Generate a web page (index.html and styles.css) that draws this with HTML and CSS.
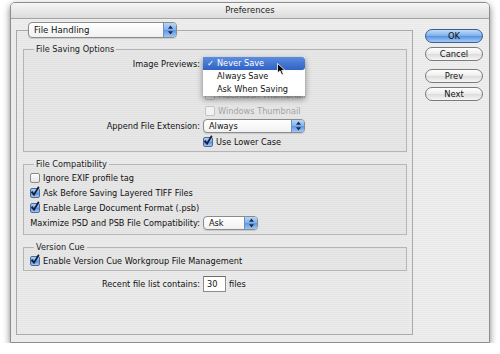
FILE: index.html
```html
<!DOCTYPE html>
<html lang="en">
<head>
    <meta charset="UTF-8">
    <title>Preferences</title>
    <link rel="stylesheet" href="styles.css">
</head>
<body>
    <div class="window">
        <div class="titlebar">Preferences</div>

        <div class="content">
            <fieldset class="panel">
                <legend class="panel-legend">
                    <span class="popup popup-wide">
                        <span class="popup-label">File Handling</span>
                        <span class="popup-cap"><svg width="7" height="10" viewBox="0 0 7 10"><path d="M3.5 0.5 L6 3.8 H1Z M3.5 9.5 L6 6.2 H1Z" fill="#1b2a48"/></svg></span>
                    </span>
                </legend>

                <fieldset class="group group-saving">
                    <legend>File Saving Options</legend>
                    <div class="form-grid">
                        <span class="field-label">Image Previews:</span>
                        <div class="field has-menu">
                            <span class="popup">
                                <span class="popup-label"></span>
                                <span class="popup-cap"></span>
                            </span>
                            <ul class="menu">
                                <li class="menu-item selected"><span class="tick">&#10003;</span>Never Save</li>
                                <li class="menu-item">Always Save</li>
                                <li class="menu-item">Ask When Saving</li>
                            </ul>
                            <svg class="cursor" width="9" height="13" viewBox="0 0 9 13"><path d="M0.5 0.5 L0.5 10 L3 7.8 L4.8 12 L6.4 11.3 L4.7 7.3 L8 7.3 Z" fill="#000" stroke="#fff" stroke-width="0.8"/></svg>
                        </div>

                        <!-- rows hidden under the open menu -->
                        <span></span>
                        <div class="field muted"></div>

                        <span></span>
                        <div class="field muted">
                            <span class="check off"></span><span class="check-text">Macintosh Thumbnail</span>
                        </div>

                        <span></span>
                        <div class="field muted">
                            <span class="check off"></span><span class="check-text">Windows Thumbnail</span>
                        </div>

                        <span class="field-label">Append File Extension:</span>
                        <div class="field">
                            <span class="popup">
                                <span class="popup-label">Always</span>
                                <span class="popup-cap"><svg width="7" height="10" viewBox="0 0 7 10"><path d="M3.5 0.5 L6 3.8 H1Z M3.5 9.5 L6 6.2 H1Z" fill="#1b2a48"/></svg></span>
                            </span>
                        </div>

                        <span></span>
                        <div class="field">
                            <span class="check on"><svg width="10" height="11" viewBox="0 0 10 11"><path d="M1.6 5.6 L4 8.6 L8.8 0.8" fill="none" stroke="#14213d" stroke-width="1.8"/></svg></span><span class="check-text">Use Lower Case</span>
                        </div>
                    </div>
                </fieldset>

                <fieldset class="group group-compat">
                    <legend>File Compatibility</legend>
                    <div class="form-grid">
                        <div class="field wide">
                            <span class="check off"></span><span class="check-text">Ignore EXIF profile tag</span>
                        </div>
                        <div class="field wide">
                            <span class="check on"><svg width="10" height="11" viewBox="0 0 10 11"><path d="M1.6 5.6 L4 8.6 L8.8 0.8" fill="none" stroke="#14213d" stroke-width="1.8"/></svg></span><span class="check-text">Ask Before Saving Layered TIFF Files</span>
                        </div>
                        <div class="field wide">
                            <span class="check on"><svg width="10" height="11" viewBox="0 0 10 11"><path d="M1.6 5.6 L4 8.6 L8.8 0.8" fill="none" stroke="#14213d" stroke-width="1.8"/></svg></span><span class="check-text">Enable Large Document Format (.psb)</span>
                        </div>
                        <span class="field-label">Maximize PSD and PSB File Compatibility:</span>
                        <div class="field">
                            <span class="popup popup-small">
                                <span class="popup-label">Ask</span>
                                <span class="popup-cap"><svg width="7" height="10" viewBox="0 0 7 10"><path d="M3.5 0.5 L6 3.8 H1Z M3.5 9.5 L6 6.2 H1Z" fill="#1b2a48"/></svg></span>
                            </span>
                        </div>
                    </div>
                </fieldset>

                <fieldset class="group group-cue">
                    <legend>Version Cue</legend>
                    <div class="form-grid">
                        <div class="field wide">
                            <span class="check on"><svg width="10" height="11" viewBox="0 0 10 11"><path d="M1.6 5.6 L4 8.6 L8.8 0.8" fill="none" stroke="#14213d" stroke-width="1.8"/></svg></span><span class="check-text">Enable Version Cue Workgroup File Management</span>
                        </div>
                    </div>
                </fieldset>

                <div class="recent-row">
                    <span class="field-label">Recent file list contains:</span>
                    <div class="field">
                        <span class="text-input">30</span>
                        <span class="unit">files</span>
                    </div>
                </div>
            </fieldset>

            <div class="buttons">
                <button class="btn btn-default">OK</button>
                <button class="btn">Cancel</button>
                <button class="btn btn-prev">Prev</button>
                <button class="btn">Next</button>
            </div>
        </div>
    </div>
</body>
</html>
```

FILE: styles.css
```css
* {
    box-sizing: border-box;
}

body {
    margin: 0;
    background-color: #fff;
    font-family: 'DejaVu Sans', sans-serif;
    font-size: 8.2px;
    color: #111;
}

.window {
    width: 480px;
    height: 341px;
    margin: 2px 0 0 10px;
    border: 1px solid #8d8d8d;
    border-radius: 5px 5px 0 0;
    background-color: #ececec;
    background-image: repeating-linear-gradient(#eeeeee 0, #eeeeee 1px, #e9e9e9 1px, #e9e9e9 2px);
    box-shadow: 0 3px 7px rgba(0, 0, 0, 0.5);
}

.titlebar {
    height: 16px;
    line-height: 15px;
    text-align: center;
    font-size: 8.4px;
    color: #222;
    border-radius: 4px 4px 0 0;
    background: linear-gradient(#f6f6f6, #dcdcdc);
    border-bottom: 1px solid #a3a3a3;
}

.content {
    display: flex;
    padding: 3px 6px 0 5px;
}

/* main box with the section popup on its border */
.panel {
    width: 397px;
    height: 313px;
    margin: 0;
    padding: 0 5px 0 6px;
    border: 1px solid #a9a9a9;
    background-color: rgba(0, 0, 0, 0.01);
}

.panel-legend {
    margin-left: 5px;
    padding: 0;
    height: 16px;
}

.group {
    margin: 0;
    border: 1px solid #b5b5b5;
    background-color: rgba(0, 0, 0, 0.015);
}

.group legend {
    margin-left: 10px;
    padding: 0 2px;
    line-height: 10px;
    color: #222;
}

.group-saving {
    margin-top: 6px;
    padding: 2.5px 0 1.5px;
}

.group-compat {
    margin-top: 7px;
    padding: 1.5px 0 3.5px;
}

.group-cue {
    margin-top: 7px;
    padding: 1.5px 0 1px;
}

.form-grid {
    display: grid;
    grid-template-columns: 176px 1fr;
    column-gap: 3px;
    align-items: center;
}

.group-saving .form-grid {
    grid-auto-rows: 15.5px;
}

.group-compat .form-grid,
.group-cue .form-grid {
    grid-auto-rows: 15px;
}

.field-label {
    text-align: right;
    white-space: nowrap;
}

.field {
    display: flex;
    align-items: center;
    white-space: nowrap;
}

.field.wide {
    grid-column: 1 / -1;
    padding-left: 6px;
}

.field.muted {
    color: #a4a4a4;
    padding-left: 2px;
}

.has-menu {
    position: relative;
}

/* aqua popup buttons */
.popup {
    display: flex;
    align-items: stretch;
    width: 102px;
    height: 14px;
    border: 1px solid #8b8b8b;
    border-radius: 4px;
    background: linear-gradient(#ffffff, #f1f1f1);
    overflow: hidden;
    box-shadow: 0 1px 1px rgba(0, 0, 0, 0.12);
}

.popup-wide {
    width: 149px;
    height: 16px;
}

.popup-small {
    width: 55px;
}

.popup-label {
    flex: 1;
    padding-left: 5px;
    line-height: 12px;
}

.popup-wide .popup-label {
    line-height: 14px;
    font-size: 8.6px;
}

.popup-cap {
    width: 13px;
    display: flex;
    align-items: center;
    justify-content: center;
    border-left: 1px solid #6f8fbf;
    background: linear-gradient(#b8d5f6, #7fb0ec 50%, #5d96e2 51%, #9cc6f5);
}

.check {
    display: inline-block;
    width: 10px;
    height: 10px;
    margin-right: 3px;
    border: 1px solid #8a8a8a;
    border-radius: 2px;
    background: linear-gradient(#ffffff, #e4e4e4);
    position: relative;
}

.muted .check {
    border-color: #c4c4c4;
    background: #f2f2f2;
}

.check.on {
    border-color: #4f6a98;
    background: linear-gradient(#b4d2f4, #6ea3e6 50%, #5590df 51%, #a3c9f3);
}

.check.on svg {
    position: absolute;
    left: -1px;
    top: -3px;
}

/* open popup menu over the row */
.menu {
    position: absolute;
    left: 0;
    top: 0;
    width: 102px;
    margin: 0;
    padding: 0;
    list-style: none;
    background-color: rgba(255, 255, 255, 0.97);
    box-shadow: 0 3px 6px rgba(0, 0, 0, 0.45);
    z-index: 2;
}

.menu-item {
    height: 13px;
    line-height: 13px;
    padding-left: 14px;
    position: relative;
}

.menu-item.selected {
    color: #fff;
    border-radius: 0 3px 3px 0;
    background: linear-gradient(#5b8de0, #2f62c4);
}

.tick {
    position: absolute;
    left: 4px;
}

.cursor {
    position: absolute;
    left: 74px;
    top: 6px;
    z-index: 3;
}

.recent-row {
    display: grid;
    grid-template-columns: 177px 1fr;
    column-gap: 3px;
    align-items: center;
    margin-top: 5.5px;
}

.text-input {
    display: inline-block;
    width: 23px;
    height: 16px;
    line-height: 14px;
    padding-left: 3px;
    border: 1px solid #8c8c8c;
    border-top-color: #6c6c6c;
    background-color: #fff;
}

.unit {
    margin-left: 3px;
}

.buttons {
    display: flex;
    flex-direction: column;
    margin-left: 12px;
    padding-top: 7px;
}

.btn {
    width: 58px;
    height: 14px;
    margin: 0 0 4px;
    padding: 0;
    font-family: 'DejaVu Sans', sans-serif;
    font-size: 8.4px;
    line-height: 12px;
    color: #111;
    border: 1px solid #7a7a7a;
    border-radius: 8px;
    background: linear-gradient(#ffffff, #ececec 50%, #dcdcdc 51%, #f6f6f6);
}

.btn-default {
    border-color: #3d5c92;
    background: linear-gradient(#c1dbf7, #79aeea 50%, #5691e0 51%, #a5cdf6);
}

.btn-prev {
    margin-top: 4px;
}
```
